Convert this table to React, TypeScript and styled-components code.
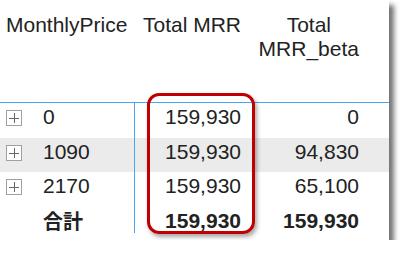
import { createGlobalStyle, styled } from "styled-components"

const GlobalStyle = createGlobalStyle`
  html, body { margin: 0; padding: 0; background: #ffffff; }
  body {
    font-family: "Liberation Sans", Arial, "Noto Sans CJK JP", sans-serif;
    color: #222222;
  }
`

interface RowData {
  price: string
  mrr: string
  beta: string
}

const rows: RowData[] = [
  { price: "0", mrr: "159,930", beta: "0" },
  { price: "1090", mrr: "159,930", beta: "94,830" },
  { price: "2170", mrr: "159,930", beta: "65,100" },
]

const ExpandIcon = () => (
  <svg width="16" height="16" viewBox="0 0 16 16">
    <rect x="0.5" y="0.5" width="15" height="15" fill="#ffffff" stroke="#a0a0a0" />
    <path d="M3 8.5h10M8.5 3v10" stroke="#666666" strokeWidth="1" />
  </svg>
)

export default function App() {
  return (
    <>
      <GlobalStyle />
      <Panel>
        <HeaderRow>
          <HeadCell $align="left">MonthlyPrice</HeadCell>
          <HeadCell $align="right"><span>Total MRR</span></HeadCell>
          <HeadCell $align="right"><span>Total<br />MRR_beta</span></HeadCell>
        </HeaderRow>
        <Body>
          {rows.map((r, i) => (
            <Row key={r.price} $shaded={i === 1}>
              <LabelCell>
                <ExpandIcon />
                <span>{r.price}</span>
              </LabelCell>
              <ValueCell>{r.mrr}</ValueCell>
              <ValueCell>{r.beta}</ValueCell>
            </Row>
          ))}
          <TotalRow>
            <LabelCell><TotalLabel>合計</TotalLabel></LabelCell>
            <ValueCell>159,930</ValueCell>
            <ValueCell>159,930</ValueCell>
          </TotalRow>
        </Body>
        <Highlight />
      </Panel>
    </>
  )
}

const columns = "135px 112px 118px 1fr"

const Panel = styled.div`
  position: relative;
  width: 389px;
  height: 240px;
  background: #ffffff;
  box-shadow: 5px 5px 5px rgba(0, 0, 0, 0.55);
  font-size: 21px;
  line-height: 24px;
`

const HeaderRow = styled.div`
  display: grid;
  grid-template-columns: ${columns};
  height: 89px;
  padding-top: 13px;
  border-bottom: 1px solid #4da3f3;
`

const HeadCell = styled.div<{ $align: "left" | "right" }>`
  display: flex;
  justify-content: ${p => (p.$align === "left" ? "flex-start" : "flex-end")};
  align-items: flex-start;
  padding: 0 6px;
  white-space: nowrap;

  span {
    text-align: center;
  }
`

const Body = styled.div`
  display: flex;
  flex-direction: column;
`

const Row = styled.div<{ $shaded?: boolean }>`
  display: grid;
  grid-template-columns: ${columns};
  height: 34.5px;
  background: ${p => (p.$shaded ? "#ebebeb" : "transparent")};
`

const TotalRow = styled(Row)`
  height: 26.5px;
  font-weight: bold;
`

const LabelCell = styled.div`
  display: flex;
  align-items: flex-start;
  gap: 21px;
  padding: 2px 0 0 6px;
  border-right: 1px solid #4da3f3;

  svg {
    margin-top: 5px;
    flex: none;
  }
`

const TotalLabel = styled.span`
  padding-left: 37px;
  font-family: "Noto Sans CJK JP", sans-serif;
  font-size: 20px;
  line-height: 24px;
`

const ValueCell = styled.div`
  padding: 2px 6px 0 0;
  text-align: right;
`

const Highlight = styled.div`
  position: absolute;
  left: 147px;
  top: 93px;
  width: 108px;
  height: 141px;
  box-sizing: border-box;
  border: 3px solid #c00000;
  border-radius: 12px;
  box-shadow: 2px 3px 4px rgba(0, 0, 0, 0.35);
  pointer-events: none;
`
